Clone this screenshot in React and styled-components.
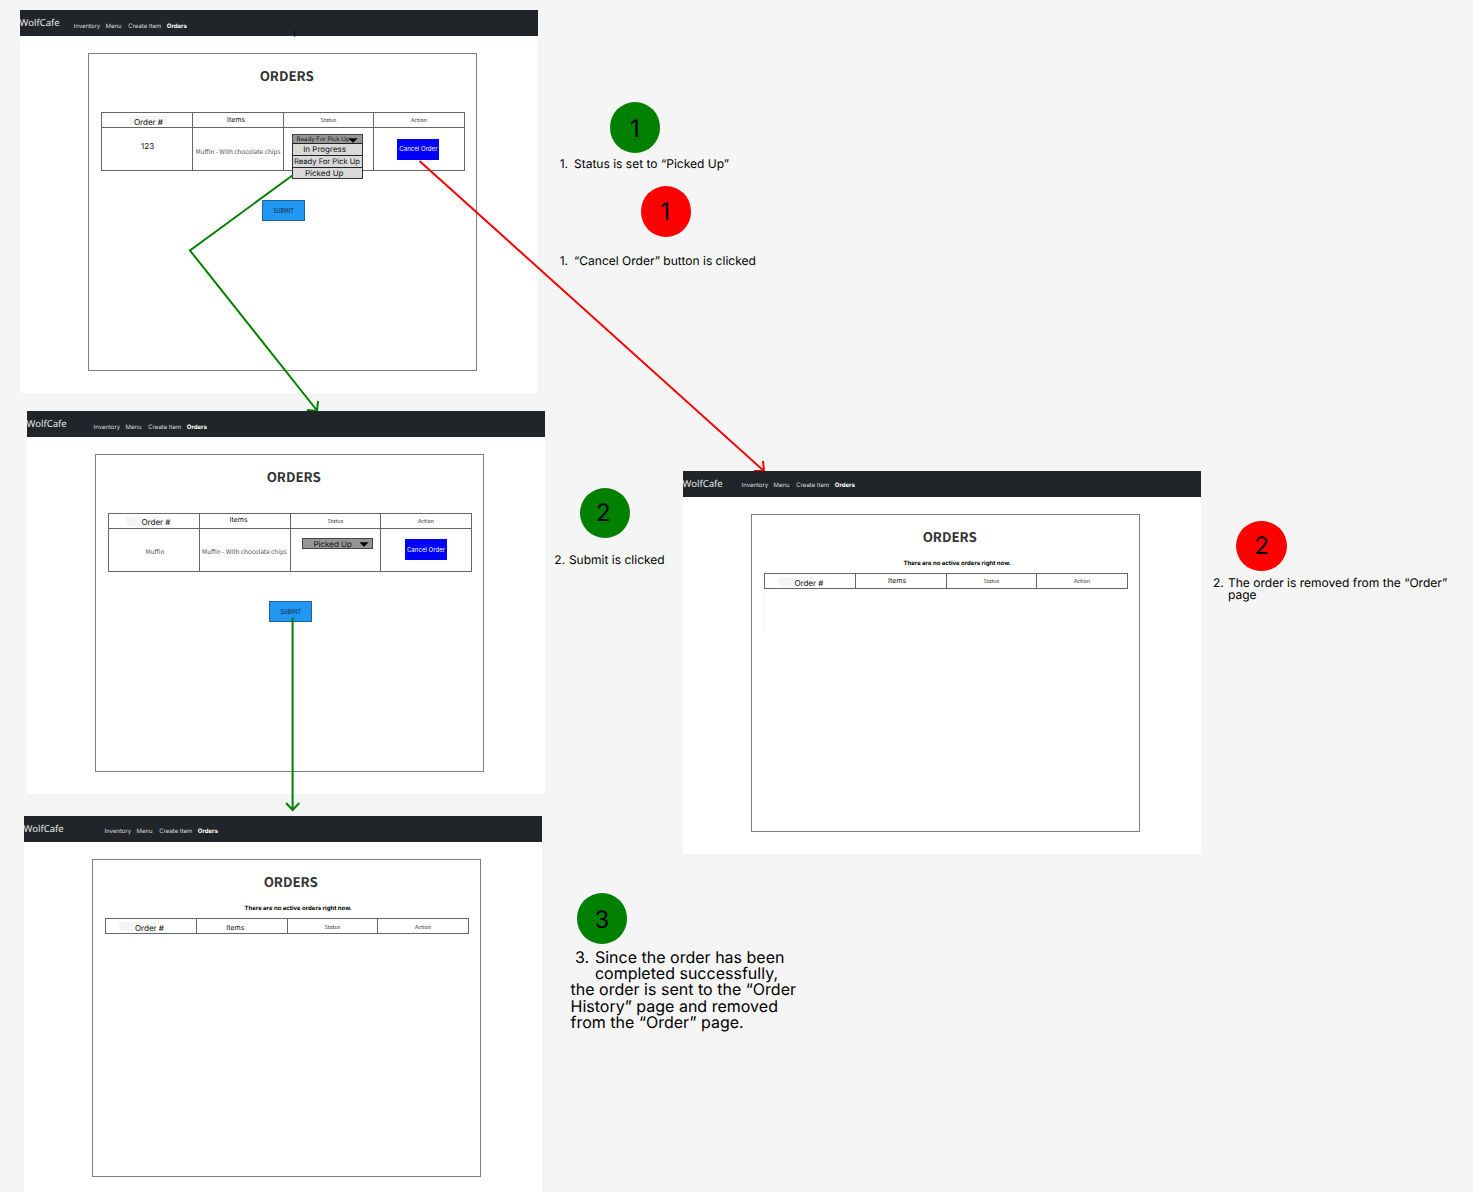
import React from "react";
import styled, { createGlobalStyle } from "styled-components";

const inter = `Inter, "Liberation Sans", sans-serif`;
const source = `"Noto Sans CJK SC", "Noto Sans", sans-serif`;

const GlobalStyle = createGlobalStyle`
  * { box-sizing: border-box; }
  body {
    margin: 0;
    background: #f5f5f5;
    font-family: ${inter};
    color: #000;
    text-rendering: geometricPrecision;
  }
`;

const Canvas = styled.main`
  position: relative;
  width: 1473px;
  height: 1192px;
  overflow: hidden;
  background: #f5f5f5;
`;

const Board = styled.section`
  position: absolute;
  left: ${(p) => p.$x}px;
  top: ${(p) => p.$y}px;
  width: 518px;
  height: 383px;
  display: flex;
  flex-direction: column;
  background: #fff;
`;

const NavBar = styled.header`
  position: relative;
  height: 26px;
  flex: none;
  display: grid;
  grid-template-columns: ${(p) => p.$linksAt}px auto;
  background: #212529;
  color: #fff;
`;

const Brand = styled.span`
  margin: 5.6px 0 0 -0.4px;
  font: 9.5px/14px "Noto Sans", sans-serif;
  color: #e9eaeb;
`;

const Links = styled.nav`
  display: grid;
  grid-template-columns: 32px 22.7px 38.5px auto;
  margin-top: ${(p) => p.$top}px;
  font-size: 6px;
  line-height: 8px;
  white-space: nowrap;
`;

const NavLink = styled.span`
  font-weight: ${(p) => (p.$active ? 700 : 400)};
  color: ${(p) => (p.$active ? "#fff" : "#dcdddd")};
`;

const StrayMark = styled.span`
  position: absolute;
  left: 272.6px;
  top: 19px;
  font-size: 8px;
  line-height: 10px;
  color: #000;
`;

const Card = styled.div`
  width: 389px;
  height: 318px;
  margin: 17px 0 0 68px;
  border: 1px solid #808080;
  display: flex;
  flex-direction: column;
`;

const Title = styled.h1`
  margin: 12px 0 0;
  padding-left: 8.4px;
  text-align: center;
  font: 700 13.3px/20px ${source};
  height: 20px;
  color: #333;
`;

const Message = styled.p`
  margin: 0;
  height: 26px;
  flex: none;
  padding: 12.2px 0 0 23.4px;
  text-align: center;
  font-size: 6px;
  line-height: 10px;
  font-weight: 700;
`;

const Table = styled.div`
  width: 364px;
  margin-left: 12px;
  border: 1px solid #666;
  flex: none;
`;

const Row = styled.div`
  display: grid;
  grid-template-columns: 90px 91px 90px 91px;
  height: ${(p) => (p.$body ? 43 : 14)}px;
  border-top: ${(p) => (p.$body ? "1px solid #666" : "none")};
`;

const Cell = styled.div`
  position: relative;
  border-left: 1px solid #666;
  padding: ${(p) => p.$top || 0}px 0 0 ${(p) => p.$left || 0}px;
  text-align: ${(p) => (p.$center ? "center" : "left")};
  white-space: nowrap;
  &:first-child { border-left: none; }
`;

const Plate = styled.span`
  position: absolute;
  left: ${(p) => p.$x}px;
  top: 3px;
  width: 37px;
  height: 9px;
  background: #f5f5f5;
`;

const Label = styled.span`
  position: relative;
  display: block;
  font-family: ${(p) => (p.$source ? source : inter)};
  font-size: ${(p) => p.$size}px;
  line-height: 10px;
  height: 10px;
  color: ${(p) => p.$color || "#111"};
`;

const Select = styled.div`
  position: relative;
  width: 71px;
  height: ${(p) => (p.$open ? 10 : 11)}px;
  border: 1px solid #444;
  background: #969696;
  display: flex;
  align-items: center;
  padding-top: ${(p) => (p.$open ? 1 : 0)}px;
  padding-left: ${(p) => (p.$open ? 3.6 : 10.4)}px;
  font-size: ${(p) => (p.$open ? 6.1 : 8)}px;
  line-height: 8px;
  color: #111;
`;

const Caret = styled.svg`
  position: absolute;
  left: ${(p) => p.$x}px;
  top: 2.6px;
  width: 10px;
  height: 5px;
`;

const Menu = styled.div`
  position: absolute;
  left: -1px;
  top: 8px;
  width: 71px;
  border: 1px solid #333;
  border-top: none;
`;

const Option = styled.div`
  height: ${(p) => p.$h}px;
  background: #d9d9d9;
  border-top: 1px solid #222;
  padding-left: ${(p) => p.$left}px;
  font-size: ${(p) => p.$size || 8}px;
  line-height: ${(p) => p.$h - 1}px;
`;

const CancelButton = styled.button`
  display: block;
  width: 42px;
  height: 21px;
  padding: 0;
  border: 0;
  background: #0000ff;
  color: #fff;
  font: 6.1px/20px ${inter};
  text-align: center;
  white-space: nowrap;
`;

const SubmitButton = styled.button`
  margin: 29px 0 0 173px;
  width: 43px;
  height: 21px;
  padding: 0;
  border: 1px solid #1d6396;
  background: #2196f3;
  color: #102a3e;
  font: 5.6px/18px ${source};
`;

const FaintRule = styled.div`
  width: 1px;
  height: 43px;
  margin-left: 11px;
  background: #f5f5f5;
`;

const Connector = styled.svg`
  position: absolute;
  left: 0;
  top: 0;
  width: 1473px;
  height: 1192px;
  pointer-events: none;
  fill: none;
  stroke: ${(p) => p.$color};
  stroke-width: 2;
`;

const Step = styled.div`
  position: absolute;
  left: ${(p) => p.$x}px;
  top: ${(p) => p.$y}px;
  width: 50.4px;
  height: 50.4px;
  border-radius: 50%;
  background: ${(p) => p.$color};
  padding-top: ${(p) => p.$shift || 0}px;
  padding-right: ${(p) => p.$right || 0}px;
  text-align: center;
  font-size: 24px;
  line-height: 50px;
`;

const Note = styled.div`
  position: absolute;
  left: ${(p) => p.$x}px;
  top: ${(p) => p.$y}px;
  font-size: ${(p) => p.$size || 12}px;
  line-height: ${(p) => p.$line || 12.2}px;
  letter-spacing: 0.01px;
  white-space: nowrap;
`;

const ListLine = styled.div`
  display: grid;
  grid-template-columns: ${(p) => p.$marker}px auto;
  padding-left: ${(p) => p.$indent || 0}px;
`;

const Header = ({ plate, order, items, small = 2 }) => (
  <Row>
    <Cell $left={order[0]} $top={order[1]}>
      <Plate $x={plate} />
      <Label $size={8}>Order #</Label>
    </Cell>
    <Cell $left={items[0]} $top={items[1]}>
      <Label $size={7}>Items</Label>
    </Cell>
    <Cell $center $top={small}>
      <Label $source $size={5.4} $color="#333">Status</Label>
    </Cell>
    <Cell $center $top={small}>
      <Label $source $size={5.4} $color="#333">Action</Label>
    </Cell>
  </Row>
);

const OrdersBoard = ({ x, y, linksAt, linksTop, mark, message, header, row, submit, rule }) => (
  <Board $x={x} $y={y}>
    <NavBar $linksAt={linksAt}>
      <Brand>WolfCafe</Brand>
      <Links $top={linksTop}>
        <NavLink>Inventory</NavLink>
        <NavLink>Menu</NavLink>
        <NavLink>Create Item</NavLink>
        <NavLink $active>Orders</NavLink>
      </Links>
      {mark && <StrayMark>1</StrayMark>}
    </NavBar>
    <Card>
      <Title>ORDERS</Title>
      <Message>{message}</Message>
      <Table>
        <Header {...header} />
        {row}
      </Table>
      {submit && <SubmitButton>SUBMIT</SubmitButton>}
      {rule && <FaintRule />}
    </Card>
  </Board>
);

const CaretIcon = ({ x }) => (
  <Caret $x={x} viewBox="0 0 10 5">
    <path d="M0.3 0.3H9.7L5 4.8Z" fill="#000" />
  </Caret>
);

const PendingRow = () => (
  <Row $body>
    <Cell $left={39} $top={13}>
      <Label $size={8}>123</Label>
    </Cell>
    <Cell $left={2.6} $top={18.7}>
      <Label $source $size={6.35} $color="#555">Muffin - With chocolate chips</Label>
    </Cell>
    <Cell $left={8} $top={6}>
      <Select $open>
        Ready For Pick Up
        <CaretIcon x={55} />
        <Menu>
          <Option $h={12} $left={10.2}>In Progress</Option>
          <Option $h={12} $left={1} $size={7.6}>Ready For Pick Up</Option>
          <Option $h={11} $left={12}>Picked Up</Option>
        </Menu>
      </Select>
    </Cell>
    <Cell $left={23.4} $top={10.5}>
      <CancelButton>Cancel Order</CancelButton>
    </Cell>
  </Row>
);

const PickedUpRow = () => (
  <Row $body>
    <Cell $left={36.6} $top={18}>
      <Label $source $size={6.35} $color="#555">Muffin</Label>
    </Cell>
    <Cell $left={2} $top={18}>
      <Label $source $size={6.35} $color="#555">Muffin - With chocolate chips</Label>
    </Cell>
    <Cell $left={11} $top={9}>
      <Select>
        Picked Up
        <CaretIcon x={55.5} />
      </Select>
    </Cell>
    <Cell $left={24} $top={10}>
      <CancelButton>Cancel Order</CancelButton>
    </Cell>
  </Row>
);

const emptyText = "There are no active orders right now.";

export default function App() {
  return (
    <>
      <GlobalStyle />
      <Canvas>
        <OrdersBoard
          x={20} y={10} linksAt={53.6} linksTop={13.4} mark submit
          header={{ plate: 28, order: [32, 3.7], items: [34, 1.5] }}
          row={<PendingRow />}
        />
        <Connector $color="#008000">
          <path d="M293 175L190 250.5L317 410.5M318 401L317 411L307 410" />
        </Connector>
        <Connector $color="#ff0000">
          <path d="M419.5 161L764 471M763 461L764 471L754 471" />
        </Connector>
        <OrdersBoard
          x={27} y={411} linksAt={66.6} linksTop={13.3} submit
          header={{ plate: 17, order: [32.5, 3.3], items: [29.5, 1] }}
          row={<PickedUpRow />}
        />
        <Connector $color="#008000">
          <path d="M292.6 617.5V810M286 803L292.6 810L299.3 803" />
        </Connector>
        <OrdersBoard
          x={24} y={816} linksAt={80.6} linksTop={11.6} message={emptyText}
          header={{ plate: 13, order: [29, 3.7], items: [29.3, 3.5], small: 2.5 }}
        />
        <OrdersBoard
          x={683} y={471} linksAt={58.6} linksTop={10.6} message={emptyText} rule
          header={{ plate: 13, order: [29.4, 3.7], items: [32, 1.7] }}
        />

        <Step $x={609.8} $y={102.3} $color="#008000" $shift={1.8}>1</Step>
        <Note $x={559.7} $y={157.5}>
          <ListLine $marker={14.3}><span>1.</span><span>Status is set to “Picked Up”</span></ListLine>
        </Note>

        <Step $x={640.5} $y={186.3} $color="#ff0000" $shift={0.6} $right={1}>1</Step>
        <Note $x={559.7} $y={255}>
          <ListLine $marker={14.3}><span>1.</span><span>“Cancel Order” button is clicked</span></ListLine>
        </Note>

        <Step $x={579.8} $y={488} $color="#008000" $right={3.5}>2</Step>
        <Note $x={554.3} $y={554}>
          <ListLine $marker={14.6}><span>2.</span><span>Submit is clicked</span></ListLine>
        </Note>

        <Step $x={576.7} $y={893.3} $color="#008000" $shift={1.7}>3</Step>
        <Note $x={570.5} $y={949.3} $size={16} $line={16.1}>
          <ListLine $marker={20} $indent={4.4}>
            <span>3.</span>
            <span>Since the order has been<br />completed successfully,</span>
          </ListLine>
          the order is sent to the “Order<br />
          History” page and removed<br />
          from the “Order” page.
        </Note>

        <Step $x={1236.4} $y={520.6} $color="#ff0000">2</Step>
        <Note $x={1213} $y={577}>
          <ListLine $marker={15}>
            <span>2.</span>
            <span>The order is removed from the “Order”<br />page</span>
          </ListLine>
        </Note>
      </Canvas>
    </>
  );
}
